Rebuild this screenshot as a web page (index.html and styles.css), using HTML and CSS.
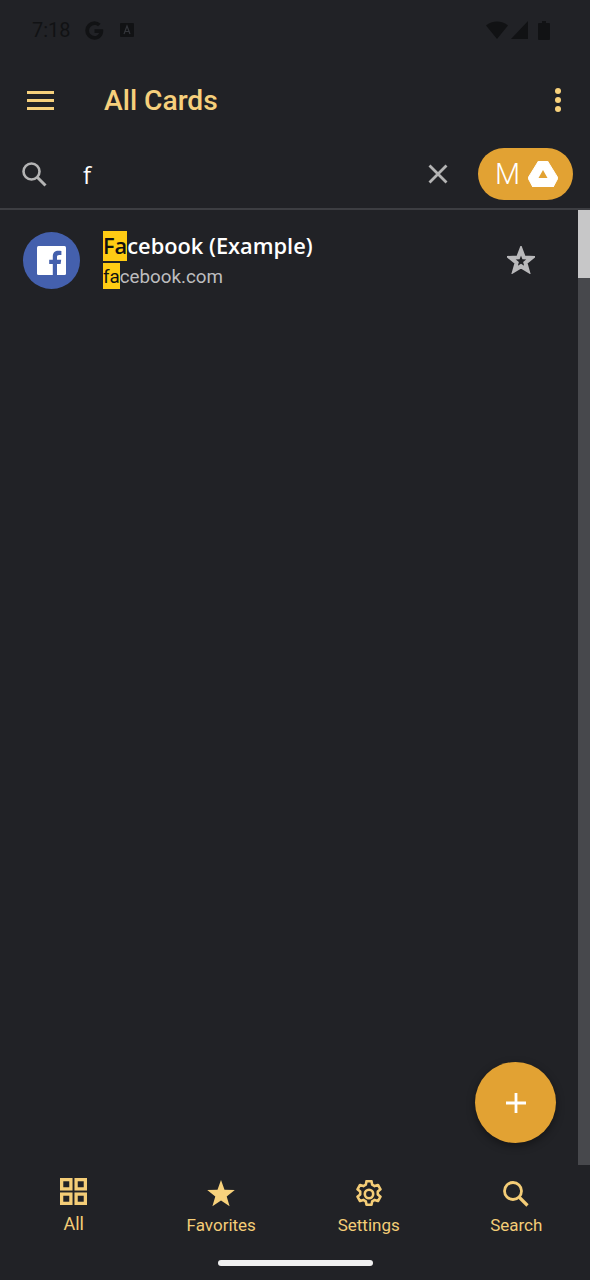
FILE: index.html
```html
<!DOCTYPE html>
<html lang="en">
<head>
    <meta charset="UTF-8">
    <meta name="viewport" content="width=device-width, initial-scale=1.0">
    <title>All Cards</title>
    <link rel="stylesheet" href="styles.css">
</head>
<body>
    <div id="app">
        <div class="status">
            <span class="time">7:18</span>
            <svg class="st-g" viewBox="2 2 16 16"><path d="M17 9H10v3h3.800c-.5 1.700-2 2.600-3.800 2.600A4.600 4.600 0 0 1 10 5.400c1.200 0 2.200.4 3 1.100l2.200-2.200A7.800 7.800 0 0 0 10 2.200a7.800 7.800 0 1 0 0 15.600c4.500 0 7.400-3.200 7.400-7.700 0-.4 0-.8-.4-1.100z" fill="#111214"/></svg>
            <svg class="st-a" viewBox="0 0 14 14"><rect width="14" height="14" rx="1" fill="#111214"/><path d="M4 11l3-8 3 8M5.200 8.500h3.600" fill="none" stroke="#33353a" stroke-width="1.200"/></svg>
            <span class="st-gap"></span>
            <svg class="st-wifi" viewBox="0 0 22 18"><path d="M0 4.500C3 1.800 7 .5 11 .5s8 1.300 11 4L11 18z" fill="#111214"/></svg>
            <svg class="st-signal" viewBox="0 0 17 18"><path d="M17 0v18H0z" fill="#111214"/></svg>
            <svg class="st-batt" viewBox="0 0 12 19"><path d="M4 0h4v2h3a1 1 0 0 1 1 1v15a1 1 0 0 1-1 1H1a1 1 0 0 1-1-1V3a1 1 0 0 1 1-1h3z" fill="#111214"/></svg>
        </div>

        <div class="toolbar">
            <div class="burger"><i></i><i></i><i></i></div>
            <div class="title">All Cards</div>
            <div class="dots"><i></i><i></i><i></i></div>
        </div>

        <div class="searchbar">
            <svg class="s-icon" viewBox="0 0 26 26"><circle cx="10.500" cy="10.500" r="8" fill="none" stroke="#b4b4b4" stroke-width="2.600"/><path d="M16.500 16.500l8 8" stroke="#b4b4b4" stroke-width="3" fill="none"/></svg>
            <div class="s-text">f</div>
            <svg class="s-clear" viewBox="0 0 20 20"><path d="M1.500 1.500l17 17M18.500 1.500l-17 17" stroke="#b4b4b4" stroke-width="2.800" fill="none"/></svg>
            <div class="account">
                <span>M</span>
                <svg viewBox="0 0 30 26"><path d="M10.500 0h9L30 17l-4.800 9H4.800L0 17z" fill="#fff" stroke="#fff" stroke-linejoin="round"/><path d="M15 9l4.500 8h-9z" fill="#e2a233"/></svg>
            </div>
        </div>

        <div class="main">
            <div class="list">
                <div class="card">
                    <div class="logo">
                        <svg viewBox="0 0 29 29"><rect width="29" height="29" rx="1.500" fill="#fff"/><path d="M20 29V18h3.600l.6-4.300H20v-2.700c0-1.300.4-2.100 2.200-2.100h2.200V5c-.4 0-1.700-.2-3.200-.2-3.200 0-5.400 2-5.400 5.500v3.400h-3.600V18h3.600v11z" fill="#4460ad"/></svg>
                    </div>
                    <div class="info">
                        <div class="name"><mark>Fa</mark>cebook (Example)</div>
                        <div class="url"><mark>fa</mark>cebook.com</div>
                    </div>
                    <svg class="fav" viewBox="0 0 28 28"><path d="M14 4l2.800 7.400 7.700.4-6.100 4.900 2.100 7.500L14 20.200l-6.500 4 2.100-7.500-6.100-4.900 7.700-.4z" fill="#212226" stroke="#b9b9bb" stroke-width="4"/></svg>
                </div>
            </div>
            <div class="scrollbar"><div class="thumb"></div></div>
            <div class="fab">
                <svg viewBox="0 0 22 22"><path d="M11 1v20M1 11h20" stroke="#fff" stroke-width="2.800" fill="none"/></svg>
            </div>
        </div>

        <div class="nav">
            <div class="nav-item">
                <svg class="nav-all" viewBox="0 0 28 28"><g fill="none" stroke="#f4cd77" stroke-width="3.400"><rect x="1.700" y="1.700" width="9.600" height="9.600"/><rect x="16.700" y="1.700" width="9.600" height="9.600"/><rect x="1.700" y="16.700" width="9.600" height="9.600"/><rect x="16.700" y="16.700" width="9.600" height="9.600"/></g></svg>
                <span class="nav-label big">All</span>
            </div>
            <div class="nav-item">
                <svg class="nav-icon" viewBox="0 0 28 28"><path d="M14 0l3.500 9.700 10.300.4-8.100 6.300 2.900 9.900L14 20.500l-8.600 5.800 2.900-9.900L.2 10.100l10.300-.4z" fill="#f8d27c"/></svg>
                <span class="nav-label">Favorites</span>
            </div>
            <div class="nav-item">
                <svg class="nav-icon" viewBox="0 0 28 28"><g fill="none" stroke="#f4cd77" stroke-width="2.600" stroke-linejoin="round"><path d="M11.500 1.200h5l.7 3.500 2.400 1.400 3.400-1.100 2.500 4.300-2.700 2.300v2.800l2.700 2.300-2.500 4.300-3.400-1.100-2.400 1.400-.7 3.500h-5l-.7-3.500-2.400-1.400-3.400 1.100-2.500-4.300 2.700-2.300v-2.800L2.500 9.300 5 5 8.400 6.100l2.400-1.400z"/><circle cx="14" cy="14" r="4.200"/></g></svg>
                <span class="nav-label">Settings</span>
            </div>
            <div class="nav-item">
                <svg class="nav-icon" viewBox="0 0 28 28"><circle cx="11" cy="11" r="8.500" fill="none" stroke="#f4cd77" stroke-width="2.800"/><path d="M17.500 17.500l8 8" stroke="#f4cd77" stroke-width="3.200" fill="none"/></svg>
                <span class="nav-label">Search</span>
            </div>
            <div class="home-bar"></div>
        </div>
    </div>
</body>
</html>
```

FILE: styles.css
```css
* {
    margin: 0;
    padding: 0;
    box-sizing: border-box;
}

body {
    background: #212226;
    font-family: Roboto, "Liberation Sans", sans-serif;
}

#app {
    display: flex;
    flex-direction: column;
    width: 590px;
    height: 1280px;
    overflow: hidden;
    background: #212226;
}

svg {
    display: block;
    flex: none;
}

/* status bar */
.status {
    display: flex;
    align-items: center;
    height: 60px;
    padding: 0 40px 0 32px;
}

.time {
    font-size: 20px;
    color: #111214;
    width: 53px;
}

.st-g {
    width: 19px;
    height: 19px;
}

.st-a {
    width: 14px;
    height: 14px;
    margin-left: 16px;
}

.st-gap {
    flex: 1;
}

.st-wifi {
    width: 22px;
    height: 18px;
}

.st-signal {
    width: 17px;
    height: 18px;
    margin-left: 3px;
}

.st-batt {
    width: 12px;
    height: 19px;
    margin-left: 10px;
}

/* toolbar */
.toolbar {
    display: flex;
    align-items: center;
    height: 80px;
    padding: 0 29px 0 27px;
}

.burger {
    display: flex;
    flex-direction: column;
    gap: 5px;
    width: 27px;
}

.burger i {
    display: block;
    height: 3px;
    background: #f6d07c;
}

.title {
    flex: 1;
    margin-left: 50px;
    font-size: 28.200px;
    font-weight: 500;
    color: #f6d07c;
}

.dots {
    display: flex;
    flex-direction: column;
    gap: 3px;
}

.dots i {
    display: block;
    width: 6px;
    height: 6px;
    border-radius: 50%;
    background: #f8d27c;
}

/* search */
.searchbar {
    display: flex;
    align-items: center;
    height: 70px;
    padding: 0 17px 0 21px;
    border-bottom: 2px solid #3d3e42;
}

.s-icon {
    width: 26px;
    height: 26px;
}

.s-text {
    flex: 1;
    margin-left: 36px;
    font-family: "Open Sans", sans-serif;
    font-size: 24px;
    color: #fff;
}

.s-clear {
    width: 20px;
    height: 20px;
}

.account {
    display: flex;
    align-items: center;
    gap: 8px;
    width: 95px;
    height: 52px;
    margin-left: 30px;
    padding-left: 17px;
    border-radius: 26px;
    background: #e2a233;
    color: #fff;
    font-size: 29px;
    font-weight: 300;
}

.account svg {
    width: 30px;
    height: 26px;
}

/* list */
.main {
    position: relative;
    display: flex;
    flex: 1;
    min-height: 0;
}

.list {
    flex: 1;
}

.card {
    display: flex;
    align-items: center;
    height: 100px;
    padding: 0 43px 0 23px;
}

.logo {
    display: flex;
    align-items: center;
    justify-content: center;
    width: 57px;
    height: 57px;
    border-radius: 50%;
    background: #4460ad;
}

.logo svg {
    width: 29px;
    height: 29px;
}

.info {
    display: flex;
    flex-direction: column;
    gap: 2px;
    flex: 1;
    margin-left: 23px;
}

.name {
    font-family: "Open Sans", sans-serif;
    font-size: 21.800px;
    font-weight: 600;
    line-height: 29px;
    color: #fff;
}

.name mark {
    padding-bottom: 1px;
}

.url {
    font-size: 18.800px;
    line-height: 24px;
    color: #bdbdbf;
}

.url mark {
    padding-top: 2px;
}

mark {
    display: inline-block;
    background: #ffcc14;
    color: #111;
}

.fav {
    width: 28px;
    height: 28px;
}

.scrollbar {
    width: 12px;
    background: #47484c;
}

.thumb {
    height: 68px;
    background: #c7c7c8;
}

.fab {
    position: absolute;
    right: 34px;
    bottom: 22px;
    display: flex;
    align-items: center;
    justify-content: center;
    width: 81px;
    height: 81px;
    border-radius: 50%;
    background: #e2a233;
    box-shadow: 0 3px 8px rgba(0, 0, 0, .4);
}

.fab svg {
    width: 22px;
    height: 22px;
}

/* bottom nav */
.nav {
    position: relative;
    display: grid;
    grid-template-columns: repeat(4, 147.5px);
    flex: none;
    height: 115px;
}

.nav-item {
    display: flex;
    flex-direction: column;
    align-items: center;
    padding-top: 15px;
}

.nav-icon {
    width: 28px;
    height: 28px;
}

.nav-all {
    width: 27px;
    height: 27px;
    margin: -2px 0 2px;
}

.nav-label {
    margin-top: 7px;
    font-size: 17px;
    line-height: 20px;
    color: #f4cd77;
}

.nav-label.big {
    font-size: 18px;
}

.home-bar {
    position: absolute;
    left: 218px;
    bottom: 14px;
    width: 155px;
    height: 6px;
    border-radius: 3px;
    background: #f0f0f0;
}
```
